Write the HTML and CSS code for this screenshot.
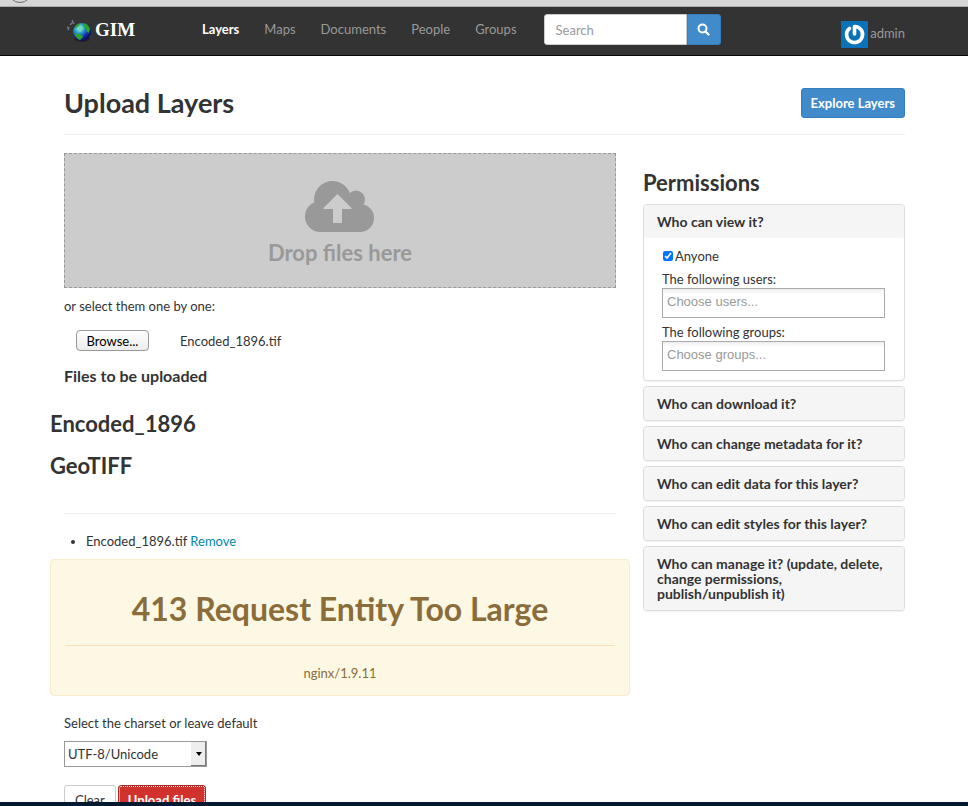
FILE: index.html
```html
<!DOCTYPE html>
<html lang="en">
<head>
<meta charset="utf-8">
<title>Upload Layers - GIM</title>
<link rel="stylesheet" href="styles.css">
</head>
<body>
<div class="chrome-edge" aria-hidden="true">
  <svg width="40" height="7" viewBox="0 0 40 7"><circle cx="20" cy="-9" r="11.500" fill="#d8d8d8" stroke="#6a6a6a" stroke-width="1"/></svg>
</div>
<div class="page">
  <header class="navbar">
    <a class="brand" href="#">
      <svg width="28" height="26" viewBox="0 0 28 26" aria-hidden="true">
        <defs>
          <radialGradient id="sea" cx=".35" cy=".3" r=".75"><stop offset="0" stop-color="#8fe6ee"/><stop offset=".35" stop-color="#2b9ed0"/><stop offset=".7" stop-color="#1626a0"/><stop offset="1" stop-color="#050a50"/></radialGradient>
        </defs>
        <ellipse cx="18" cy="22" rx="8" ry="3" fill="#1c1c1c" opacity=".6"/>
        <circle cx="18" cy="15" r="9" fill="url(#sea)"/>
        <path d="M10 12c1-3 3-5 6-6l-1 3-3 2zM20 6c3 1 5 3 6 6l-1 4-2-1-1-3-2-2zM10 16l4 1 4 1 1 2-3 3c-3-1-5-4-6-7z" fill="#2ba52f"/>
        <path d="M13 11l4-3 3 3-3 4-3-1z" fill="#6fd9b0" opacity=".8"/>
        <path d="M4 13l1-3M6 8l3-3M8 3l2 4M3 10l2 1" stroke="#777087" stroke-width="1.500" fill="none"/>
      </svg>
      <span>GIM</span>
    </a>
    <nav class="menu">
      <a class="active" href="#">Layers</a>
      <a href="#">Maps</a>
      <a href="#">Documents</a>
      <a href="#">People</a>
      <a href="#">Groups</a>
    </nav>
    <form class="search">
      <input type="search" placeholder="Search" aria-label="Search">
      <button type="button" aria-label="Search">
        <svg width="13" height="13" viewBox="0 0 13 13"><circle cx="5.500" cy="5.500" r="4" fill="none" stroke="#fff" stroke-width="2"/><path d="M8.500 8.500l3 3" stroke="#fff" stroke-width="2.200" stroke-linecap="round"/></svg>
      </button>
    </form>
    <a class="user" href="#">
      <svg width="27" height="27" viewBox="0 0 27 27" aria-hidden="true"><rect width="27" height="27" fill="#0a73b8"/><path d="M8.500 7.300A8 8 0 1 0 13.500 5.500V13" fill="none" stroke="#fff" stroke-width="3.600" stroke-linecap="round" stroke-linejoin="round"/></svg>
      <span>admin</span>
    </a>
  </header>

  <main class="container">
    <div class="page-header">
      <h1>Upload Layers</h1>
      <a class="btn btn-primary" href="#">Explore Layers</a>
    </div>
    <div class="columns">
      <section class="upload">
        <div class="dropzone">
          <svg width="70" height="52" viewBox="0 0 70 52" aria-hidden="true"><g fill="#999"><circle cx="27.500" cy="18.500" r="18.500"/><circle cx="51" cy="18.500" r="9"/><circle cx="15.500" cy="35.500" r="15.500"/><circle cx="55" cy="37" r="14"/><path d="M15.500 20H52l3 31H15.500z"/></g><path fill="#ccc" d="M32.500 13L46.500 27V28H37V42H28V28H18.500V27z"/></svg>
          <h2>Drop files here</h2>
        </div>
        <p class="hint">or select them one by one:</p>
        <div class="picker">
          <button class="browse" type="button">Browse...</button>
          <span>Encoded_1896.tif</span>
        </div>
        <h4>Files to be uploaded</h4>
        <div class="bleed file-heading">
          <h3>Encoded_1896</h3>
          <h3>GeoTIFF</h3>
        </div>
        <hr>
        <ul class="files">
          <li>Encoded_1896.tif <a href="#">Remove</a></li>
        </ul>
        <div class="bleed alert" role="alert">
          <h2>413 Request Entity Too Large</h2>
          <hr>
          <p>nginx/1.9.11</p>
        </div>
        <label class="charset-label" for="charset">Select the charset or leave default</label>
        <div class="select">
          <select id="charset"><option>UTF-8/Unicode</option></select>
          <svg class="arrow" width="15" height="24" viewBox="0 0 15 24" aria-hidden="true"><rect width="15" height="24" fill="#777"/><rect width="14" height="23" fill="#eee"/><path d="M5 10h6l-3 4z" fill="#000"/></svg>
        </div>
        <div class="actions">
          <button class="btn btn-default" type="button">Clear</button>
          <button class="btn btn-danger" type="button">Upload files</button>
        </div>
      </section>

      <aside class="permissions">
        <h3>Permissions</h3>
        <div class="panel">
          <h4>Who can view it?</h4>
          <div class="panel-body">
            <label class="check"><input type="checkbox" checked>Anyone</label>
            <label for="users">The following users:</label>
            <input id="users" type="text" placeholder="Choose users...">
            <label for="groups">The following groups:</label>
            <input id="groups" type="text" placeholder="Choose groups...">
          </div>
        </div>
        <div class="panel"><h4>Who can download it?</h4></div>
        <div class="panel"><h4>Who can change metadata for it?</h4></div>
        <div class="panel"><h4>Who can edit data for this layer?</h4></div>
        <div class="panel"><h4>Who can edit styles for this layer?</h4></div>
        <div class="panel"><h4>Who can manage it? (update, delete, change permissions, publish/unpublish it)</h4></div>
      </aside>
    </div>
  </main>
</div>
<div class="desktop-edge" aria-hidden="true"></div>
</body>
</html>
```
FILE: styles.css
```css
* { box-sizing: border-box; }
body {
  margin: 0;
  height: 100vh;
  display: flex;
  flex-direction: column;
  overflow: hidden;
  background: #fff;
  color: #333;
  font: 13px/18px Lato, sans-serif;
}
h1, h2, h3, h4, p, ul { margin: 0; }
h1, h2, h3, h4 { font-weight: 700; }
a { color: #0088b2; text-decoration: none; }
input, select, button { font: inherit; color: inherit; }
hr { margin: 0; border: 0; border-top: 1px solid #eee; }

.chrome-edge { flex: none; height: 7px; background: #d6d6d6; border-bottom: 1px solid #aaa; }
.chrome-edge svg { display: block; }
.desktop-edge { flex: none; height: 4px; background: #03192f; }
.page { flex: 1; min-height: 0; overflow: hidden; }

.navbar {
  display: flex;
  align-items: flex-start;
  height: 49px;
  padding: 7px 63px 0 64px;
  background: #333;
  border-bottom: 1px solid #080808;
}
.brand {
  display: flex;
  align-items: center;
  gap: 3px;
  width: 138px;
  height: 32px;
  color: #fff;
  font: 700 19px/32px "Liberation Serif", serif;
}
.brand svg { flex: none; }
.menu { display: flex; gap: 25px; line-height: 31px; }
.menu a { color: #999; }
.menu .active { color: #fff; font-weight: 700; }
.search { display: flex; margin-left: 27px; }
.search input {
  width: 143px;
  height: 31px;
  padding: 0 11px;
  border: 1px solid #ccc;
  border-radius: 3px 0 0 3px;
  background: #fff;
}
input::placeholder { color: #999; opacity: 1; }
.search button {
  display: flex;
  align-items: center;
  justify-content: center;
  width: 34px;
  height: 31px;
  padding: 0;
  border: 1px solid #357ebd;
  border-radius: 0 3px 3px 0;
  background: #428bca;
}
.user { display: flex; align-items: flex-start; gap: 2px; margin: 7px 0 0 auto; color: #999; line-height: 25px; }

.container { padding: 0 63px 0 64px; }
.page-header {
  display: flex;
  align-items: center;
  justify-content: space-between;
  padding: 32px 0 16px;
  border-bottom: 1px solid #eee;
}
.page-header h1 { font-size: 27px; line-height: 30px; }
.btn { padding: 5px 9px; border: 1px solid; border-radius: 3px; line-height: 18px; }
.btn-primary { background: #428bca; border-color: #357ebd; color: #fff; font-weight: 700; }
.btn-default { padding: 5px 10px; background: #fff; border-color: #ccc; }
.btn-danger { background: #d2322d; border-color: #ac2925; color: #fff; font-weight: 700; outline: 1px dotted #fff; outline-offset: -2px; }

.columns { display: grid; grid-template-columns: minmax(0, 1fr) 262px; gap: 27px; padding-top: 18px; }
.bleed { margin-left: -14px; margin-right: -14px; }
.dropzone {
  display: flex;
  flex-direction: column;
  align-items: center;
  gap: 6px;
  height: 135px;
  padding-top: 27px;
  background: #ccc;
  border: 1px dashed #999;
  color: #999;
}
.dropzone h2 { font-size: 22px; line-height: 28px; }
.hint { margin-top: 9px; }
.picker { display: flex; align-items: center; gap: 31px; margin: 15px 0 0 12px; }
.browse {
  width: 73px;
  height: 21px;
  padding: 0;
  border: 1px solid #999;
  border-radius: 4px;
  background: linear-gradient(#fff, #ececec);
  color: #000;
  line-height: 18px;
}
.upload h4 { margin-top: 15px; font-size: 16px; line-height: 20px; }
.file-heading { display: grid; gap: 18px; margin-top: 26px; }
h3 { font-size: 22px; line-height: 24px; }
.upload > hr { margin-top: 35px; }
.files { margin-top: 18px; padding-left: 22px; }
.alert {
  margin-top: 9px;
  padding: 31px 14px 13px;
  background: #fcf8e3;
  border: 1px solid #faebcc;
  border-radius: 4px;
  color: #8a6d3b;
  text-align: center;
}
.alert h2 { font-size: 32px; line-height: 36px; }
.alert hr { margin: 18px 0; border-color: #f7e1b5; }
.charset-label { display: block; margin-top: 18px; }
.select { position: relative; width: 143px; margin-top: 9px; }
.select select {
  display: block;
  width: 100%;
  height: 26px;
  padding: 0 3px;
  appearance: none;
  border: 1px solid #999;
  border-radius: 0;
  background: #fff;
}
.arrow { position: absolute; top: 1px; right: 1px; pointer-events: none; }
.actions { display: flex; gap: 2px; margin-top: 18px; }

.permissions { padding-top: 18px; }
.permissions h3 { margin-bottom: 9px; }
.panel {
  margin-bottom: 5px;
  background: #fff;
  border: 1px solid #ddd;
  border-radius: 4px;
  box-shadow: 0 1px 1px rgba(0, 0, 0, .05);
}
.panel h4 { padding: 9px 13px; background: #f5f5f5; border-radius: 3px; font-size: 14px; line-height: 15px; }
.panel-body { padding: 9px 19px 9px 18px; }
.panel-body label { display: block; }
.panel-body .check { display: flex; align-items: center; gap: 2px; margin-bottom: 5px; }
.check input { width: 10px; height: 10px; margin: 0 0 0 1px; }
.panel-body input[type="text"] {
  display: block;
  width: 100%;
  height: 30px;
  padding: 0 4px 3px;
  border: 1px solid #aaa;
  background: linear-gradient(#eee 0, #fff 5px);
  font-family: "Liberation Sans", sans-serif;
}
.panel-body input + label { margin-top: 5px; }
```
